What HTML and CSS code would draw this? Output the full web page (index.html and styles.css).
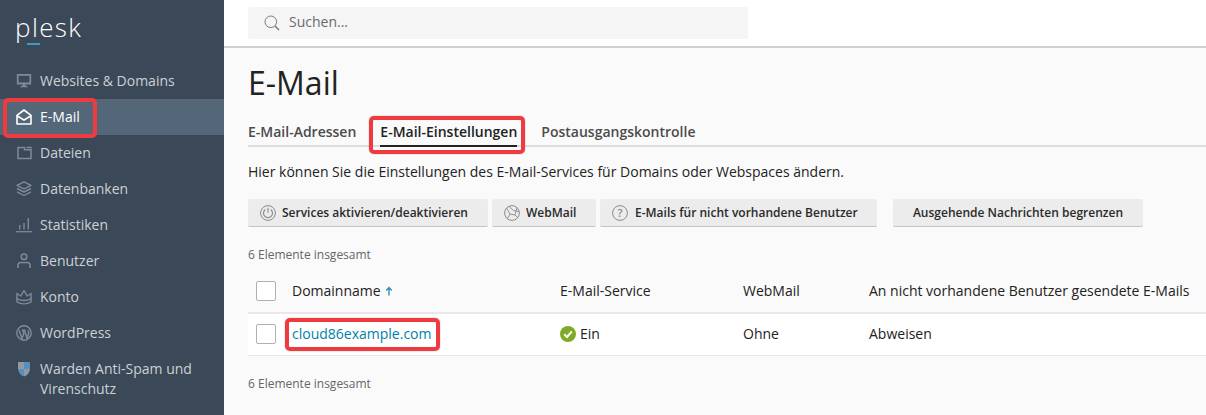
FILE: index.html
```html
<!DOCTYPE html>
<html lang="de">
<head>
<meta charset="utf-8">
<title>E-Mail</title>
<link rel="stylesheet" href="styles.css">
</head>
<body>
<div class="app">
  <aside class="sidebar">
    <div class="logo">plesk<i class="logo-bar"></i></div>
    <nav class="nav">
      <a class="nav-item"><svg class="nav-icon" viewBox="0 0 16 16"><path d="M1.700 1.800h12.600v8.700H1.700z" fill="none" stroke="currentColor" stroke-width="1.800"/><path d="M4.500 13h7v1.300h-7zM6.500 11h3v2h-3z" fill="currentColor"/></svg><span>Websites &amp; Domains</span></a>
      <a class="nav-item active"><svg class="nav-icon" viewBox="0 0 16 16"><path d="M1 6.300 8 1l7 5.300V15H1z" fill="none" stroke="currentColor" stroke-width="1.600" stroke-linejoin="round"/><path d="M1.300 7 8 11l6.700-4" fill="none" stroke="currentColor" stroke-width="1.600"/></svg><span>E-Mail</span><i class="mark mark-nav"></i></a>
      <a class="nav-item"><svg class="nav-icon" viewBox="0 0 16 16"><path d="M2 2.500v11h13V4.800H8.500V2.500zM10.500 2.500H15v1" fill="none" stroke="currentColor" stroke-width="1.500"/></svg><span>Dateien</span></a>
      <a class="nav-item"><svg class="nav-icon" viewBox="0 0 16 16"><path d="M8 .8 1 4.300 8 7.800l7-3.500zM1 7.500 8 11l7-3.500M1 10.800l7 3.700 7-3.700" fill="none" stroke="currentColor" stroke-width="1.400" stroke-linejoin="round"/></svg><span>Datenbanken</span></a>
      <a class="nav-item"><svg class="nav-icon" viewBox="0 0 16 16"><path d="M0 14.700h16" stroke="currentColor" stroke-width="1.300"/><path d="M3.700 8v4.500M8 6v6.500M12.300 1v11.500" stroke="currentColor" stroke-width="1.400" fill="none"/></svg><span>Statistiken</span></a>
      <a class="nav-item"><svg class="nav-icon" viewBox="0 0 16 16"><circle cx="8" cy="3.800" r="2.800" fill="none" stroke="currentColor" stroke-width="1.500"/><path d="M2 15v-2.500Q2 9.500 5 9.500h6q3 0 3 3V15" fill="none" stroke="currentColor" stroke-width="1.500"/></svg><span>Benutzer</span></a>
      <a class="nav-item"><svg class="nav-icon" viewBox="0 0 16 16"><path d="M.9 4.500 4.800 7 8 1.500 11.200 7l3.900-2.500V13q-3 1.900-7.100 1.900T.9 13z" fill="none" stroke="currentColor" stroke-width="1.400" stroke-linejoin="round"/><path d="M1 9.800q7 3.400 14 0" fill="none" stroke="currentColor" stroke-width="1.400"/></svg><span>Konto</span></a>
      <a class="nav-item"><svg class="nav-icon" viewBox="0 0 16 16"><circle cx="8" cy="8" r="7.200" fill="none" stroke="currentColor" stroke-width="1.400"/><path d="M3 5.200 6 13.500l1.800-5-1-3.300M5.800 5.200h3.800M8.600 5.200l2.400 8.300 1.500-4.700q.6-2-.4-3.800" fill="none" stroke="currentColor" stroke-width="1.500"/></svg><span>WordPress</span></a>
      <a class="nav-item tall"><svg class="nav-icon shield" viewBox="0 0 16 16"><path d="M2 1h6v7H2z" fill="#8e9aa6"/><path d="M8 1h6v7H8z" fill="#5a8fbc"/><path d="M2 8h6v7.500Q3 14 2 8z" fill="#5a8fbc"/><path d="M8 8h6q-1 6-6 7.500z" fill="#8e9aa6"/></svg><span>Warden Anti-Spam und<br>Virenschutz</span></a>
    </nav>
  </aside>
  <div class="main">
    <header class="topbar">
      <div class="search">
        <svg class="search-icon" viewBox="0 0 16 16"><circle cx="6.800" cy="6.800" r="5.800" fill="none" stroke="#7d7d7d" stroke-width="1"/><path d="M11 11l4 4" stroke="#7d7d7d" stroke-width="1.600"/></svg>
        <span class="search-text">Suchen...</span>
      </div>
    </header>
    <main class="content">
      <h1 class="title">E-Mail</h1>
      <div class="tabs">
        <a class="tab">E-Mail-Adressen</a>
        <a class="tab current">E-Mail-Einstellungen<i class="mark mark-tab"></i></a>
        <a class="tab">Postausgangskontrolle</a>
      </div>
      <p class="hint">Hier können Sie die Einstellungen des E-Mail-Services für Domains oder Webspaces ändern.</p>
      <div class="toolbar">
        <button class="btn btn-a"><svg class="btn-icon" viewBox="0 0 16 16"><circle cx="8" cy="8" r="7.400" fill="none" stroke="#8a8a8a"/><path d="M5.300 4.500a4.500 4.500 0 1 0 5.400 0M8 2.800v5" fill="none" stroke="#8a8a8a" stroke-width="1.100"/></svg>Services aktivieren/deaktivieren</button>
        <button class="btn btn-b"><svg class="btn-icon" viewBox="0 0 16 16"><circle cx="8" cy="8" r="7.400" fill="none" stroke="#8a8a8a"/><path d="M2.500 3 6 9l-2.500 4.500M6 9l5 1 2.500 2.500M11 10l2-7.500M5 1.500 9.500 5.500 15 6.500" fill="none" stroke="#8a8a8a" stroke-width=".9"/></svg>WebMail</button>
        <button class="btn btn-c"><svg class="btn-icon" viewBox="0 0 16 16"><circle cx="8" cy="8" r="7.400" fill="none" stroke="#8a8a8a"/><text x="8" y="11.800" text-anchor="middle" class="q">?</text></svg>E-Mails für nicht vorhandene Benutzer</button>
        <button class="btn btn-wide">Ausgehende Nachrichten begrenzen</button>
      </div>
      <p class="count count-top">6 Elemente insgesamt</p>
      <div class="table">
        <div class="row head">
          <span class="cell c-check"><i class="check"></i></span>
          <span class="cell c-name">Domainname <svg class="sort" viewBox="0 0 8 10"><path d="M4 9.500V2M1.200 4.500 4 1.500l2.800 3" fill="none" stroke="#2f8fb5" stroke-width="1.400"/></svg></span>
          <span class="cell c-mail">E-Mail-Service</span>
          <span class="cell c-web">WebMail</span>
          <span class="cell c-rest">An nicht vorhandene Benutzer gesendete E-Mails</span>
        </div>
        <div class="row body">
          <span class="cell c-check"><i class="check"></i></span>
          <span class="cell c-name"><a class="link">cloud86example.com<i class="mark mark-link"></i></a></span>
          <span class="cell c-mail"><svg class="ok" viewBox="0 0 16 16"><circle cx="8" cy="8" r="8" fill="#7eaa24"/><path d="M4.200 8.200 7 11l4.800-5.500" fill="none" stroke="#fff" stroke-width="2"/></svg>Ein</span>
          <span class="cell c-web">Ohne</span>
          <span class="cell c-rest">Abweisen</span>
        </div>
      </div>
      <p class="count count-bottom">6 Elemente insgesamt</p>
    </main>
  </div>
</div>
</body>
</html>
```
FILE: styles.css
```css
* { box-sizing: border-box; }
html, body { margin: 0; height: 100%; overflow: hidden; }
body { font-family: "Open Sans", "Noto Sans", sans-serif; font-size: 14px; color: #222; background: #fafafa; }
.app { display: flex; width: 1206px; height: 415px; }

.sidebar { width: 224px; flex: none; background: #3b4858; color: #d5d9de; }
.logo { position: relative; height: 63px; padding: 5px 0 0 15px; font-size: 26px; font-weight: 300; line-height: 44px; color: #fff; letter-spacing: 1.400px; }
.logo-bar { position: absolute; left: 27px; top: 43px; width: 13px; height: 2px; background: #35a0c4; }
.nav { display: flex; flex-direction: column; }
.nav-item { position: relative; display: flex; align-items: center; gap: 8px; height: 36px; padding-left: 16px; font-size: 14px; line-height: 20px; color: #ccd1d6; }
.nav-item.tall { height: 50px; align-items: flex-start; padding-top: 8px; }
.nav-item.active { background: #536779; color: #fff; }
.nav-icon { width: 16px; height: 16px; flex: none; color: #7f8a96; }
.active .nav-icon { color: #fff; }
.shield { margin-top: 2px; }

.mark { position: absolute; display: block; border: 4px solid #ef3b3f; border-radius: 5px; box-shadow: 0 0 1px #555; pointer-events: none; }
.mark-nav { left: 3px; top: -1px; width: 94px; height: 40px; }
.mark-tab { left: -11px; top: 1px; width: 156px; height: 38px; }
.mark-link { left: -7px; top: -6px; width: 155px; height: 33px; }

.main { flex: 1; display: flex; flex-direction: column; min-width: 0; }
.topbar { height: 48px; background: #fff; border-bottom: 2px solid #d0d0d0; padding: 7px 0 0 24px; flex: none; }
.search { display: flex; align-items: center; gap: 9px; width: 500px; height: 32px; padding-left: 16px; background: #f5f5f5; border-radius: 3px; color: #6a6a6a; font-size: 14px; }
.search-icon { width: 16px; height: 16px; }
.search-text { line-height: 20px; margin-bottom: 2px; }

.content { flex: 1; padding: 0 0 0 24px; background: #fafafa; }
.title { margin: 13px 0 0; font-size: 32px; font-weight: 400; line-height: 44px; color: #222; }
.tabs { display: flex; gap: 24px; height: 32px; margin-top: 10px; border-bottom: 2px solid #dcdcdc; }
.tab { position: relative; font-size: 14px; font-weight: 600; line-height: 20px; color: #4b4b4b; height: 32px; padding-top: 7px; }
.tab.current { color: #222; border-bottom: 2px solid #222; }
.hint { margin: 15px 0 0; font-size: 14px; line-height: 20px; color: #222; }
.toolbar { display: flex; gap: 4px; margin-top: 17px; }
.btn { display: flex; align-items: center; gap: 6px; height: 28px; padding: 0 0 0 12px; border: 0; border-bottom: 1px solid #c4c4c4; border-radius: 2px; background: #ececec; font: 600 12px/16px "Open Sans", sans-serif; color: #2a2a2a; white-space: nowrap; flex: none; }
.btn-a { width: 240px; }
.btn-b { width: 104px; }
.btn-c { width: 277px; gap: 7px; }
.btn-wide { margin-left: 12px; padding: 0; width: 250px; justify-content: center; }
.btn-icon { width: 16px; height: 16px; flex: none; }
.q { font: 600 11px "Open Sans", sans-serif; fill: #8a8a8a; }
.count { margin: 0; font-size: 12px; line-height: 16px; color: #666; }
.count-top { margin-top: 20px; }
.count-bottom { margin-top: 20px; }
.table { margin-top: 6px; }
.row { display: flex; align-items: center; }
.row.head { height: 45px; padding-top: 1px; border-bottom: 2px solid #e8e8e8; }
.row.body { height: 42px; padding-bottom: 1px; background: #fff; border-bottom: 1px solid #e8e8e8; }
.cell { display: flex; align-items: center; font-size: 14px; line-height: 20px; color: #222; flex: none; }
.c-check { width: 44px; padding-left: 8px; }
.c-name { width: 268px; white-space: pre; }
.c-mail { width: 183px; }
.c-web { width: 126px; }
.c-rest { width: 340px; }
.check { display: block; width: 20px; height: 20px; border: 1px solid #b0b0b0; border-radius: 2px; background: #fff; }
.sort { width: 8px; height: 10px; margin-left: 1px; }
.link { position: relative; color: #007fa8; }
.ok { width: 16px; height: 16px; margin: 0 4px 0 0; }
```
